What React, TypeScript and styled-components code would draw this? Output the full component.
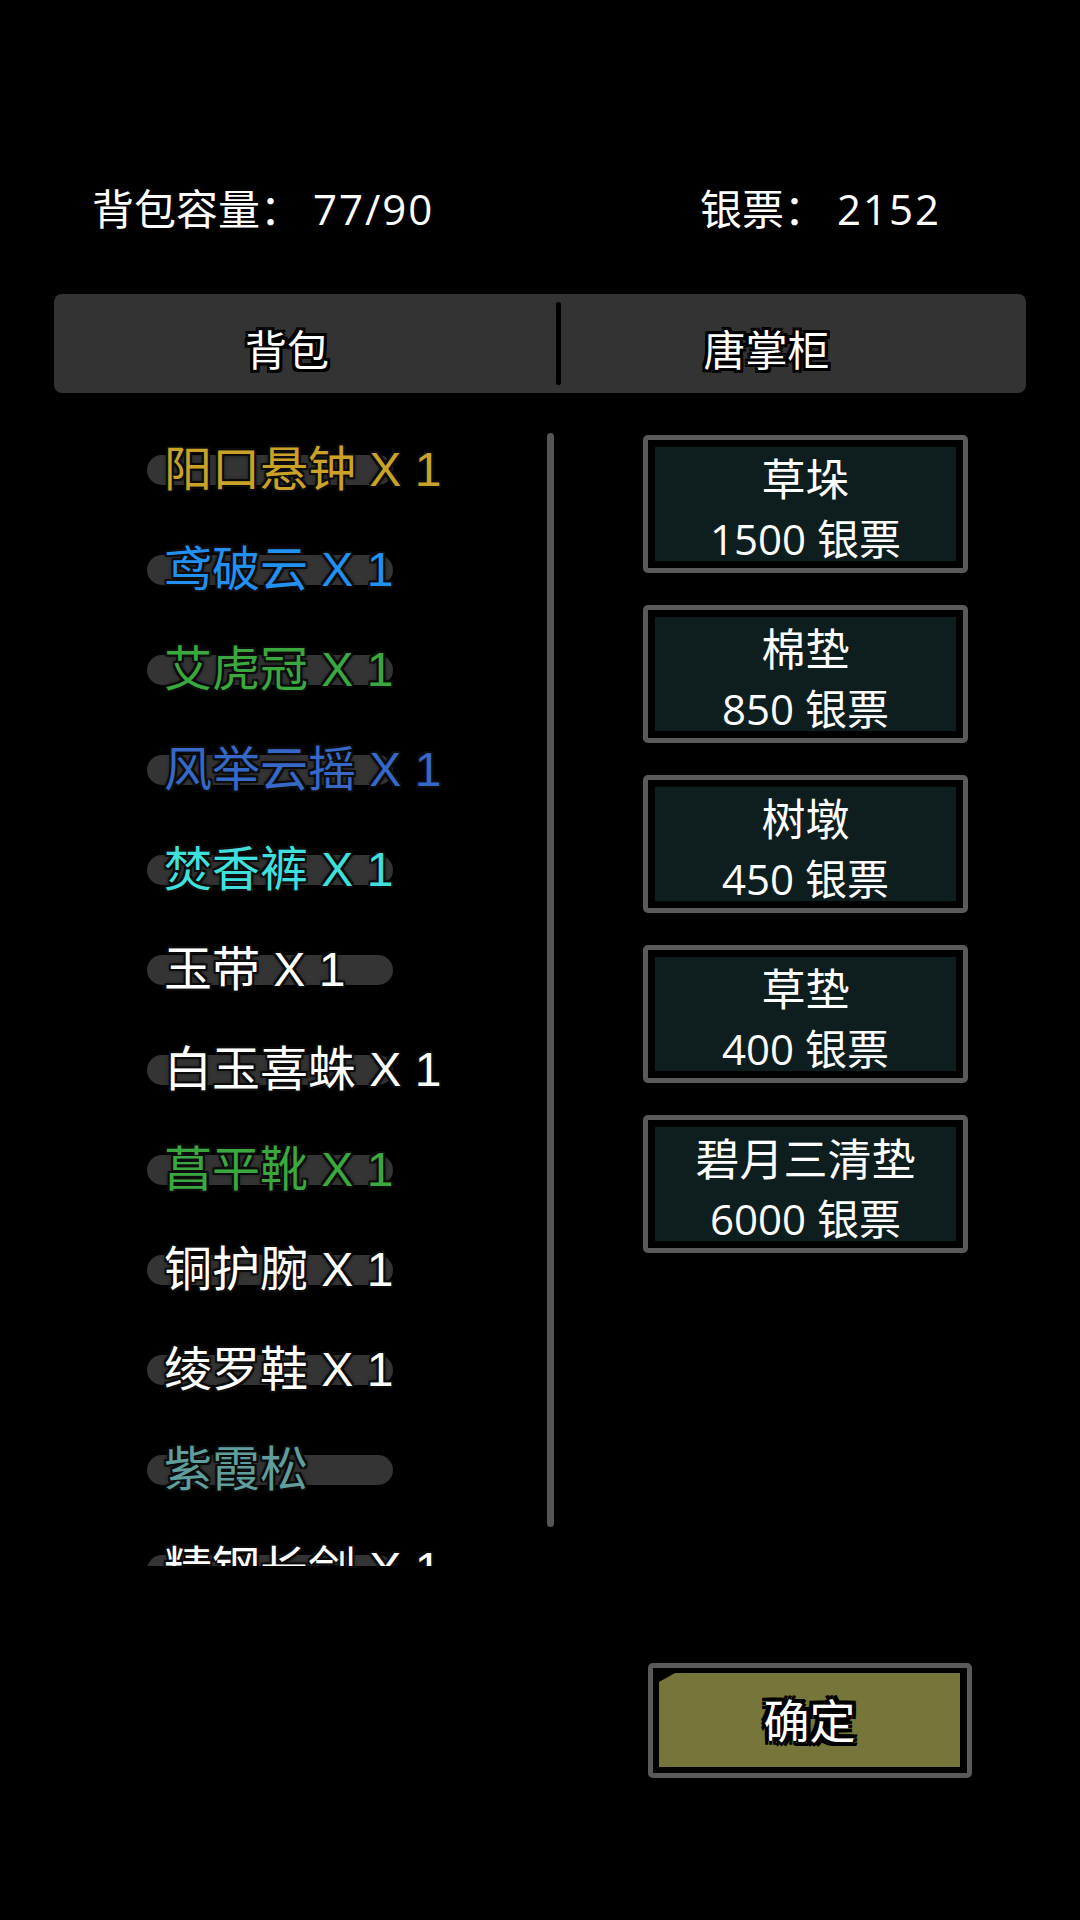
import styled, { createGlobalStyle } from 'styled-components';

const GlobalStyle = createGlobalStyle`
  html, body {
    margin: 0;
    padding: 0;
    background: #000;
  }
  body {
    font-family: "Liberation Sans", "Noto Sans CJK SC", sans-serif;
    color: #fff;
  }
`;

const outline = (w: number, c: string) =>
  [
    `${w}px 0 ${c}`,
    `-${w}px 0 ${c}`,
    `0 ${w}px ${c}`,
    `0 -${w}px ${c}`,
    `${w}px ${w}px ${c}`,
    `-${w}px -${w}px ${c}`,
    `${w}px -${w}px ${c}`,
    `-${w}px ${w}px ${c}`,
  ].join(', ');

type BagItem = { name: string; count?: number; color: string };

const bagItems: BagItem[] = [
  { name: '阳口悬钟', count: 1, color: '#c9a227' },
  { name: '鸢破云', count: 1, color: '#2190f0' },
  { name: '艾虎冠', count: 1, color: '#3aa83e' },
  { name: '风举云摇', count: 1, color: '#3668c8' },
  { name: '焚香裤', count: 1, color: '#3fe0dc' },
  { name: '玉带', count: 1, color: '#ffffff' },
  { name: '白玉喜蛛', count: 1, color: '#ffffff' },
  { name: '菖平靴', count: 1, color: '#3aa83e' },
  { name: '铜护腕', count: 1, color: '#ffffff' },
  { name: '绫罗鞋', count: 1, color: '#ffffff' },
  { name: '紫霞松', color: '#5f9e9c' },
  { name: '精钢长剑', count: 1, color: '#ffffff' },
];

const shopItems = [
  { name: '草垛', price: 1500 },
  { name: '棉垫', price: 850 },
  { name: '树墩', price: 450 },
  { name: '草垫', price: 400 },
  { name: '碧月三清垫', price: 6000 },
];

const App = () => {
  return (
    <>
      <GlobalStyle />
      <Page>
        <Header>
          <Stat>
            背包容量： <StatValue>77/90</StatValue>
          </Stat>
          <Stat>
            银票： <StatValue>2152</StatValue>
          </Stat>
        </Header>

        <TabBar>
          <Tab $width={502} $shift={36}>背包</Tab>
          <TabDivider />
          <Tab $shift={54}>唐掌柜</Tab>
        </TabBar>

        <Main>
          <BagList>
            {bagItems.map((item, index) => (
              <BagRow key={`bag_${index}`}>
                <Pill />
                <BagText $color={item.color}>
                  {item.count ? `${item.name} X ${item.count}` : item.name}
                </BagText>
              </BagRow>
            ))}
          </BagList>
          <ScrollBar />
          <ShopColumn>
            {shopItems.map((item, index) => (
              <ShopCard key={`shop_${index}`}>
                <ShopInner>
                  <ShopName>{item.name}</ShopName>
                  <ShopPrice>{item.price} 银票</ShopPrice>
                </ShopInner>
              </ShopCard>
            ))}
          </ShopColumn>
        </Main>

        <Footer>
          <ConfirmButton>
            <ConfirmFill>
              <ConfirmLabel>确定</ConfirmLabel>
            </ConfirmFill>
          </ConfirmButton>
        </Footer>
      </Page>
    </>
  );
};

const Page = styled.div`
  width: 1080px;
  height: 1920px;
  background: #000;
  display: flex;
  flex-direction: column;
  overflow: hidden;
`;

const Header = styled.div`
  display: grid;
  grid-template-columns: 608px auto;
  padding: 179px 0 0 92px;
  height: 60px;
`;

const Stat = styled.div`
  font-family: "Open Sans", "Noto Sans CJK SC", sans-serif;
  font-size: 42px;
  line-height: 60px;
  color: #fff;
  white-space: pre;
`;

const StatValue = styled.span`
  letter-spacing: 2px;
`;

const TabBar = styled.div`
  margin: 55px 54px 0;
  height: 99px;
  background: #333333;
  border-radius: 8px;
  display: flex;
  align-items: stretch;
`;

const Tab = styled.div<{ $width?: number; $shift: number }>`
  box-sizing: border-box;
  flex: ${(p) => (p.$width ? `0 0 ${p.$width}px` : '1')};
  display: flex;
  align-items: center;
  justify-content: center;
  padding: 8px ${(p) => p.$shift}px 0 0;
  font-size: 42px;
  color: #fff;
  text-shadow: ${outline(3, '#000')};
`;

const TabDivider = styled.div`
  width: 5px;
  margin: 8px 0;
  background: #000;
  border-radius: 3px;
`;

const Main = styled.div`
  margin-top: 27px;
  height: 1146px;
  display: flex;
  align-items: flex-start;
`;

const BagList = styled.div`
  width: 547px;
  height: 1146px;
  overflow: hidden;
  display: flex;
  flex-direction: column;
`;

const BagRow = styled.div`
  flex: 0 0 100px;
  display: grid;
  align-items: center;
`;

const Pill = styled.div`
  grid-area: 1 / 1;
  margin-left: 147px;
  width: 246px;
  height: 30px;
  border-radius: 15px;
  background: #343434;
`;

const BagText = styled.div<{ $color: string }>`
  grid-area: 1 / 1;
  margin-left: 164px;
  font-size: 48px;
  line-height: 60px;
  color: ${(p) => p.$color};
  white-space: pre;
  text-shadow: ${outline(2, 'rgba(12,12,12,0.95)')}, 0 0 5px #000;
`;

const ScrollBar = styled.div`
  width: 7px;
  height: 1094px;
  margin-top: 13px;
  background: #555;
  border-radius: 4px;
`;

const ShopColumn = styled.div`
  margin-left: 89px;
  padding-top: 15px;
  width: 325px;
  display: flex;
  flex-direction: column;
  gap: 32px;
`;

const ShopCard = styled.div`
  height: 138px;
  box-sizing: border-box;
  border: 5px solid #5a5a5a;
  border-radius: 5px;
  background: #000;
  padding: 7px;
  display: flex;
`;

const ShopInner = styled.div`
  flex: 1;
  background: #0e1e1e;
  display: flex;
  flex-direction: column;
  align-items: center;
  padding-top: 3px;
  font-family: "Open Sans", "Noto Sans CJK SC", sans-serif;
`;

const ShopName = styled.div`
  font-size: 44px;
  line-height: 59px;
  color: #fff;
`;

const ShopPrice = styled.div`
  font-size: 42px;
  line-height: 59px;
  color: #fff;
`;

const Footer = styled.div`
  margin-top: 97px;
  padding-left: 648px;
  display: flex;
`;

const ConfirmButton = styled.div`
  width: 324px;
  height: 115px;
  box-sizing: border-box;
  border: 5px solid #5a5a5a;
  border-radius: 5px;
  background: #000;
  padding: 5px 7px 6px 6px;
  display: flex;
`;

const ConfirmFill = styled.div`
  flex: 1;
  background: #76763a;
  clip-path: polygon(0 9px, 16px 0, 100% 0, 100% 100%, 0 100%);
  display: flex;
  align-items: center;
  justify-content: center;
`;

const ConfirmLabel = styled.div`
  font-size: 46px;
  line-height: 60px;
  padding-top: 4px;
  color: #fff;
  text-shadow: ${outline(4, '#000')}, 0 0 3px #000;
`;

export default App;
